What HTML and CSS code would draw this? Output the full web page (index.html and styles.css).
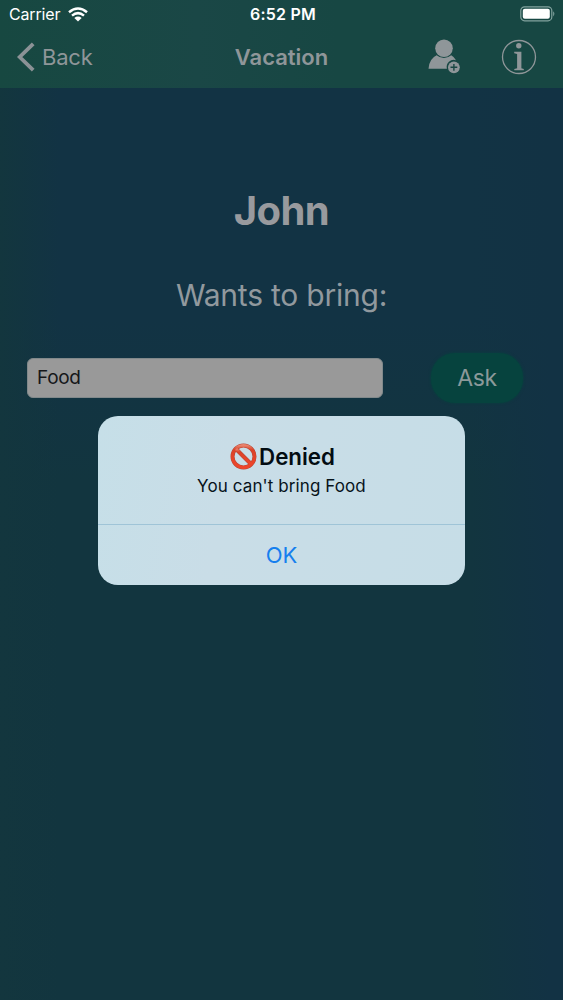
FILE: index.html
```html
<!DOCTYPE html>
<html lang="en">
<head>
<meta charset="utf-8">
<title>Vacation</title>
<link rel="stylesheet" href="styles.css">
</head>
<body>
<div class="screen">
  <header class="top">
    <div class="status">
      <div class="carrier"><span class="carrier-name">Carrier</span>
        <svg class="wifi" width="20" height="15" viewBox="0 0 20 15" fill="none" stroke="#fff" stroke-width="2.5"><path d="M1 5.3Q10-2.3 19 5.3M4 8.6Q10 3.6 16 8.6"/><path d="M6.3 10.9Q10 8 13.7 10.9L10 14.5Z" fill="#fff" stroke="none"/></svg>
      </div>
      <span class="time">6:52 PM</span>
      <svg class="battery" width="36" height="16" viewBox="0 0 36 16"><rect x="1.8" y=".8" width="31" height="14" rx="3.8" fill="none" stroke="#83a39f" stroke-width="1.2"/><rect x="3.8" y="2.8" width="27" height="10" rx="2" fill="#fff"/><path d="M34.2 5.2Q36.6 7.8 34.2 10.4Z" fill="#83a39f"/></svg>
    </div>
    <nav class="nav">
      <div class="back">
        <svg width="18" height="30" viewBox="0 0 18 30" fill="none" stroke="#8b9296" stroke-width="3.8"><path d="M16.2 1.8L2.7 15L16.2 28.2"/></svg>
        <span class="back-label">Back</span>
      </div>
      <span class="title">Vacation</span>
      <div class="actions">
        <svg width="33" height="35" viewBox="0 0 33 35"><g fill="#8f9699"><circle cx="16" cy="9.3" r="8.8"/><path d="M.5 29.8Q1 19.8 8.6 16.2Q16 22 23.2 16.2Q26.4 18 28 21.2A7.2 7.2 0 0 0 18.9 29.8Z"/><circle cx="25.9" cy="28.3" r="5.9"/></g><path d="M25.9 24.9v6.8M22.5 28.3h6.8" stroke="#194743" stroke-width="1.4"/></svg>
        <svg width="36" height="36" viewBox="0 0 36 36"><circle cx="18" cy="18" r="16.5" fill="none" stroke="#8f9699" stroke-width="1.3"/><g fill="#8f9699"><circle cx="17.8" cy="6.8" r="2.7"/><path d="M13.2 12.8h7.2v16.4l2.4.7v1.3h-9.5v-1.3l2.8-.7V15l-2.9-.7Z"/></g></svg>
      </div>
    </nav>
  </header>
  <main class="content">
    <h1 class="name">John</h1>
    <p class="prompt">Wants to bring:</p>
    <div class="form">
      <div class="field"><span class="field-text">Food</span></div>
      <div class="ask"><span class="ask-label">Ask</span></div>
    </div>
    <section class="alert">
      <div class="message">
        <div class="heading">
          <svg width="27" height="27" viewBox="0 0 27 27" fill="none"><defs><linearGradient id="red" x2="0" y2="1"><stop stop-color="#e8816b"/><stop offset=".2" stop-color="#db4228"/><stop offset="1" stop-color="#ef452b"/></linearGradient></defs><g stroke="#b94534" stroke-width="4"><circle cx="13.5" cy="13.5" r="11"/><path d="M6 6L21 21"/></g><g stroke="url(#red)" stroke-width="3"><circle cx="13.5" cy="13.5" r="11"/><path d="M6 6L21 21"/></g></svg>
          <span class="denied">Denied</span>
        </div>
        <span class="detail">You can't bring Food</span>
      </div>
      <div class="ok"><span class="ok-label">OK</span></div>
    </section>
  </main>
</div>
</body>
</html>
```
FILE: styles.css
```css
* { box-sizing: border-box; }
body { margin: 0; font-family: Inter, "Liberation Sans", sans-serif; }
.screen {
  width: 563px; height: 1000px; overflow: hidden;
  background:
    linear-gradient(90deg, #13363e 0, #13363e00 60px),
    linear-gradient(90deg, #12324400 470px, #123244 550px),
    linear-gradient(#123344 0, #123344 320px, #12353f 480px, #12353f 100%);
}
.top { height: 88px; background: linear-gradient(90deg, #174841, #1a4746 35%, #174743 60%, #174743); }
.status { height: 28px; padding: 0 8px 0 9px; display: grid; grid-template-columns: 1fr auto 1fr; align-items: center; color: #fff; }
.carrier { display: flex; align-items: center; gap: 8px; font-size: 16px; letter-spacing: -.15px; }
.time { font-size: 16px; font-weight: 600; letter-spacing: .2px; padding-left: 2px; }
.battery { justify-self: end; }
.nav { height: 60px; padding: 0 26px 3px 17px; display: grid; grid-template-columns: 1fr auto 1fr; align-items: center; color: #8f9699; }
.back { display: flex; align-items: center; gap: 7px; font-size: 22px; letter-spacing: -.2px; }
.title { font-size: 22px; font-weight: 600; padding-left: 9px; }
.actions { display: flex; align-items: center; justify-content: flex-end; gap: 40px; }
.content { display: flex; flex-direction: column; }
.name { margin: 97px 0 0; height: 52px; line-height: 52px; text-align: center; font-size: 40px; letter-spacing: -.6px; font-weight: 700; color: #989a9e; }
.prompt { margin: 38px 0 0; height: 40px; line-height: 40px; text-align: center; font-size: 30px; letter-spacing: -.22px; color: #91999e; }
.form { display: flex; align-items: center; margin-top: 38px; padding-left: 27px; height: 50px; gap: 48px; }
.field { width: 356px; height: 40px; border-radius: 6px; border: 1px solid #81898b; background: #999; padding: 0 9px 2px; display: flex; align-items: center; font-size: 19px; letter-spacing: -.3px; color: #151719; }
.ask { width: 92px; height: 50px; border-radius: 24px; background: #06433e; box-shadow: 0 0 3px #06433e; display: flex; align-items: center; justify-content: center; font-size: 23px; letter-spacing: -.3px; color: #8b999a; }
.alert { width: 367px; height: 169px; margin: 13px 0 0 98px; border-radius: 20px; overflow: hidden; background: linear-gradient(100deg, #c6dfe8, #c9dde7 35%, #c6dde7); display: flex; flex-direction: column; }
.message { height: 109px; padding-top: 26px; display: flex; flex-direction: column; align-items: center; border-bottom: 1px solid #9fc4d7; color: #07131b; }
.heading { height: 29px; display: flex; align-items: center; gap: 2px; padding-left: 2px; font-size: 22.3px; font-weight: 600; color: #030c12; }
.detail { line-height: 31px; font-size: 17px; letter-spacing: .1px; }
.ok { flex: 1; display: flex; align-items: center; justify-content: center; font-size: 22px; color: #167fee; }
```
